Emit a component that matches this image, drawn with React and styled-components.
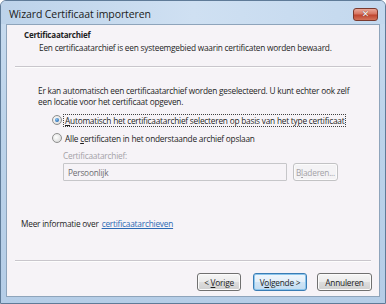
import React from 'react'
import styled, { createGlobalStyle } from 'styled-components'

const Global = createGlobalStyle`
  html, body { margin: 0; padding: 0; background: #fff; }
  body { font-family: "Open Sans", "Noto Sans", sans-serif; }
`

const Window = styled.div`
  width: 386px;
  height: 304px;
  box-sizing: border-box;
  display: flex;
  flex-direction: column;
  border: 1px solid #5f7b98;
  border-radius: 6px 6px 0 0;
  background: linear-gradient(180deg, #c9dcf0 0%, #bcd3ea 40%, #b5cde7 100%);
  overflow: hidden;
`

const TitleBar = styled.div`
  height: 23px;
  display: flex;
  align-items: center;
  justify-content: space-between;
  padding: 0 7px 0 8px;
  background: linear-gradient(90deg, #bdd3ea 0%, #cfe0f2 50%, #c3d8ee 100%);
`

const Title = styled.span`
  font-size: 10.5px;
  color: #1b1b1b;
  letter-spacing: -0.1px;
  margin-top: 2px;
`

const CloseButton = styled.div`
  width: 23px;
  height: 11px;
  margin-top: 3px;
  border-radius: 3px;
  border: 1px solid #7a3a2e;
  background: linear-gradient(180deg, #eaa899 0%, #d77561 45%, #bf4630 55%, #d3735a 100%);
  display: flex;
  align-items: center;
  justify-content: center;
  color: #fff;
  font-size: 9px;
  font-weight: bold;
  font-family: "DejaVu Sans", sans-serif;
  line-height: 1;
  text-shadow: 0 0 1px #4a1a10;
`

const Client = styled.div`
  flex: 1;
  margin: 0 5px 6px 5px;
  background: #f6f3f7;
  border: 1px solid #8ea4bb;
  display: flex;
  flex-direction: column;
  color: #1e1e1e;
  font-size: 8.3px;
  letter-spacing: -0.22px;
`

const Header = styled.div`
  padding: 4px 0 0 17px;
  height: 41px;
  box-sizing: border-box;
`

const HeaderTitle = styled.div`
  font-weight: 700;
  font-size: 8px;
  line-height: 12px;
`

const HeaderText = styled.div`
  padding-left: 15px;
  line-height: 14px;
`

const Separator = styled.div`
  height: 1px;
  margin: 0 8px;
  background: #c9c6cc;
  border-bottom: 1px solid #fdfdfd;
`

const Body = styled.div`
  padding: 17px 0 0 31px;
  display: flex;
  flex-direction: column;
`

const Paragraph = styled.p`
  margin: 0;
  line-height: 11px;
  width: 320px;
`

const Options = styled.div`
  margin: 7px 0 0 14px;
  display: flex;
  flex-direction: column;
  gap: 6px;
`

const OptionRow = styled.label`
  display: flex;
  align-items: center;
  height: 12px;
  gap: 1px;
`

const Radio = styled.span`
  width: 8px;
  height: 8px;
  border-radius: 50%;
  border: 1px solid #8f8f8f;
  background: radial-gradient(circle at 40% 40%, #ffffff 0%, #e4e4e4 60%, #cfcfcf 100%);
  display: flex;
  align-items: center;
  justify-content: center;
  flex-shrink: 0;

  &::after {
    content: '';
    width: 4px;
    height: 4px;
    border-radius: 50%;
    background: ${p => (p.$checked ? 'radial-gradient(circle at 40% 35%, #8cc4f0 0%, #2a6fb8 70%, #1c4f8e 100%)' : 'transparent')};
  }
`

const OptionText = styled.span`
  padding: 0 1px;
  line-height: 11px;
  border: 1px dotted ${p => (p.$focused ? '#404040' : 'transparent')};
`

const Field = styled.div`
  margin: 6px 0 0 25px;
  display: flex;
  flex-direction: column;
  gap: 1px;
`

const FieldLabel = styled.div`
  color: #a4a2a8;
  line-height: 12px;
`

const FieldRow = styled.div`
  display: flex;
  gap: 6px;
`

const TextBox = styled.div`
  width: 224px;
  height: 18px;
  box-sizing: border-box;
  border: 1px solid #c6c6c9;
  border-radius: 1px;
  background: #f6f3f7;
  padding: 0 4px;
  display: flex;
  align-items: center;
  color: #6d6b70;
`

const Button = styled.div`
  box-sizing: border-box;
  width: ${p => p.$w}px;
  height: 18px;
  border-radius: 3px;
  border: 1px solid ${p => (p.$disabled ? '#c2c2c4' : p.$default ? '#3a7cb4' : '#707070')};
  background: ${p =>
    p.$disabled
      ? '#f4f3f5'
      : p.$default
        ? 'linear-gradient(180deg, #f0f7fc 0%, #e2eef9 50%, #cfe4f5 51%, #c3dcf1 100%)'
        : 'linear-gradient(180deg, #f6f6f6 0%, #ebebeb 50%, #dddddd 51%, #d0d0d0 100%)'};
  box-shadow: ${p => (p.$default ? 'inset 0 0 0 1px #8cc6ed' : 'inset 0 0 0 1px #fbfbfb')};
  color: ${p => (p.$disabled ? '#a3a2a6' : '#1e1e1e')};
  display: flex;
  align-items: center;
  justify-content: center;
`

const Fill = styled.div`
  flex: 1;
  padding: 37px 0 0 14px;
  line-height: 12px;
`

const Link = styled.a`
  color: #2d6ab4;
  text-decoration: underline;
  margin-left: 3px;
`

const Footer = styled.div`
  height: 34px;
  box-sizing: border-box;
  display: flex;
  justify-content: flex-end;
  align-items: flex-start;
  padding: 11px 7px 0 0;
  gap: 10px;
`

const Back = styled(Button)`
  margin-right: 2px;
`

const U = styled.span`
  text-decoration: underline;
`

export default function App() {
  return (
    <>
      <Global />
      <Window>
        <TitleBar>
          <Title>Wizard Certificaat importeren</Title>
          <CloseButton>✕</CloseButton>
        </TitleBar>
        <Client>
          <Header>
            <HeaderTitle>Certificaatarchief</HeaderTitle>
            <HeaderText>Een certificaatarchief is een systeemgebied waarin certificaten worden bewaard.</HeaderText>
          </Header>
          <Separator />
          <Body>
            <Paragraph>
              Er kan automatisch een certificaatarchief worden geselecteerd. U kunt echter ook zelf een locatie voor het certificaat opgeven.
            </Paragraph>
            <Options>
              <OptionRow>
                <Radio $checked />
                <OptionText $focused>
                  <U>A</U>utomatisch het certificaatarchief selecteren op basis van het type certificaat
                </OptionText>
              </OptionRow>
              <OptionRow>
                <Radio />
                <OptionText>
                  Alle <U>c</U>ertificaten in het onderstaande archief opslaan
                </OptionText>
              </OptionRow>
            </Options>
            <Field>
              <FieldLabel>Certificaatarchief:</FieldLabel>
              <FieldRow>
                <TextBox>Persoonlijk</TextBox>
                <Button $w={45} $disabled>
                  B<U>l</U>aderen...
                </Button>
              </FieldRow>
            </Field>
          </Body>
          <Fill>
            Meer informatie over<Link>certificaatarchieven</Link>
          </Fill>
          <Separator />
          <Footer>
            <Back $w={44}>
              &lt;&nbsp;<U>V</U>orige
            </Back>
            <Button $w={54} $default>
              V<U>o</U>lgende &gt;
            </Button>
            <Button $w={55}>Annuleren</Button>
          </Footer>
        </Client>
      </Window>
    </>
  )
}
